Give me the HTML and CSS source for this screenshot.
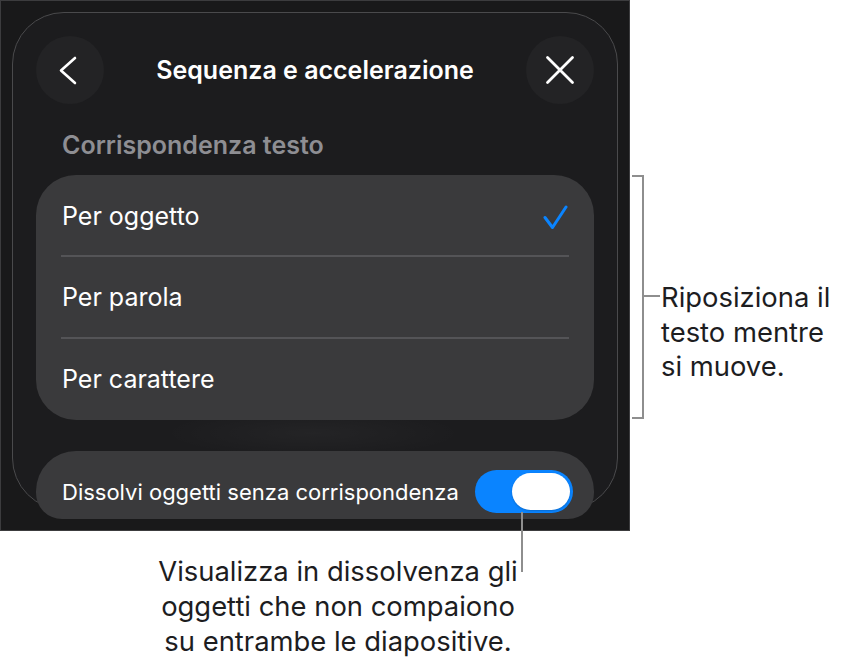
FILE: index.html
```html
<!DOCTYPE html>
<html lang="it">
<head>
<meta charset="utf-8">
<title>Sequenza e accelerazione</title>
<link rel="stylesheet" href="styles.css">
</head>
<body>
<div class="page">
  <div class="top-row">
    <div class="screen">
      <div class="sheet">
        <div class="sheet-header">
          <button class="round-btn" aria-label="Indietro">
            <svg width="68" height="68" viewBox="0 0 68 68"><path d="M39 22 L25 34.5 L39 47" fill="none" stroke="#fff" stroke-width="2.6" stroke-linecap="round" stroke-linejoin="round"/></svg>
          </button>
          <h1 class="sheet-title">Sequenza e accelerazione</h1>
          <button class="round-btn" aria-label="Chiudi">
            <svg width="68" height="68" viewBox="0 0 68 68"><path d="M21.5 21.5 L46.5 46.5 M46.5 21.5 L21.5 46.5" fill="none" stroke="#fff" stroke-width="2.8" stroke-linecap="round"/></svg>
          </button>
        </div>

        <h2 class="section-title">Corrispondenza testo</h2>

        <ul class="option-list">
          <li class="option">
            <span>Per oggetto</span>
            <svg class="check" width="26" height="26" viewBox="0 0 26 26"><path d="M2 13.5 L9.5 23.5 L23 3" fill="none" stroke="#0a84ff" stroke-width="3" stroke-linecap="round" stroke-linejoin="round"/></svg>
          </li>
          <li class="option"><span>Per parola</span></li>
          <li class="option"><span>Per carattere</span></li>
        </ul>

        <div class="toggle-card">
          <span>Dissolvi oggetti senza corrispondenza</span>
          <span class="switch on"><span class="knob"></span></span>
        </div>
      </div>
    </div>

    <div class="side-note">
      <div class="bracket"></div>
      <div class="tick"></div>
      <p class="note-text">Riposiziona il<br>testo mentre<br>si muove.</p>
    </div>
  </div>

  <p class="bottom-note">Visualizza in dissolvenza gli<br>oggetti che non compaiono<br>su entrambe le diapositive.</p>
  <div class="leader"></div>
</div>
</body>
</html>
```

FILE: styles.css
```css
* {
  box-sizing: border-box;
}

html, body {
  margin: 0;
  padding: 0;
  background: #ffffff;
}

body {
  font-family: Inter, "Noto Sans", "Liberation Sans", sans-serif;
}

.page {
  position: relative;
  width: 846px;
  height: 662px;
  overflow: hidden;
}

.top-row {
  display: flex;
  align-items: flex-start;
}

/* device screen */
.screen {
  width: 630px;
  height: 531px;
  flex: none;
  background: #19191a;
  border: 1px solid #3c3c3e;
  padding: 11px;
  overflow: hidden;
}

.sheet {
  width: 606px;
  height: 498px;
  border: 1px solid #4a4a4c;
  border-radius: 52px;
  background:
    radial-gradient(ellipse 150px 24px at 300px 420px, rgba(255, 255, 255, 0.035), rgba(255, 255, 255, 0) 100%),
    #1c1c1e;
  padding: 23px;
}

.sheet-header {
  display: flex;
  align-items: center;
  justify-content: space-between;
  height: 68px;
}

.round-btn {
  width: 68px;
  height: 68px;
  border-radius: 50%;
  border: 0;
  padding: 0;
  background: #232325;
  display: flex;
  align-items: center;
  justify-content: center;
}

.round-btn svg {
  display: block;
}

.sheet-title {
  margin: 0;
  color: #ffffff;
  font-size: 25px;
  font-weight: 600;
}

.section-title {
  margin: 26px 0 0 26px;
  color: #8e8e93;
  font-size: 25px;
  font-weight: 600;
  line-height: 30px;
}

.option-list {
  list-style: none;
  margin: 15px 0 0;
  padding: 0;
  background: #3a3a3c;
  border-radius: 40px;
}

.option {
  height: 81px;
  display: flex;
  align-items: center;
  justify-content: space-between;
  padding: 0 25px 0 26px;
  color: #ffffff;
  font-size: 25px;
  position: relative;
}

.option + .option {
  height: 82px;
}

/* inset hairline between rows */
.option + .option::before {
  content: "";
  position: absolute;
  left: 25px;
  right: 25px;
  top: -1px;
  height: 2px;
  background: #545457;
}

.check {
  display: block;
  margin-top: 2px;
}

.toggle-card {
  margin-top: 31px;
  height: 68px;
  background: #3a3a3c;
  border-radius: 40px 40px 26px 26px;
  display: flex;
  align-items: center;
  justify-content: space-between;
  padding: 13px 21px 0 26px;
  color: #ffffff;
  font-size: 22px;
}

.switch {
  width: 98px;
  height: 43px;
  border-radius: 22px;
  background: #e5e5ea;
  padding: 3px;
  display: flex;
  justify-content: flex-start;
}

.switch.on {
  background: #0a84ff;
  justify-content: flex-end;
}

.knob {
  width: 58px;
  height: 37px;
  border-radius: 19px;
  background: #ffffff;
  box-shadow: 0 1px 2px rgba(0, 0, 0, 0.2);
}

/* callouts */
.side-note {
  display: flex;
  align-items: flex-start;
  padding-top: 175px;
  margin-left: 2px;
}

.bracket {
  width: 12px;
  height: 244px;
  border: 2px solid #8e8e8e;
  border-left: 0;
}

.tick {
  width: 16px;
  margin-top: 120px;
  border-top: 2px solid #8e8e8e;
}

.note-text {
  margin: 105px 0 0 1px;
  color: #1d1d1f;
  font-size: 27.4px;
  line-height: 34.5px;
  white-space: nowrap;
}

.bottom-note {
  margin: 23px 0 0 138px;
  width: 400px;
  text-align: center;
  color: #1d1d1f;
  font-size: 27.4px;
  line-height: 35px;
  white-space: nowrap;
}

.leader {
  position: absolute;
  left: 521px;
  top: 512px;
  width: 2px;
  height: 60px;
  background: #8e8e8e;
}
```
